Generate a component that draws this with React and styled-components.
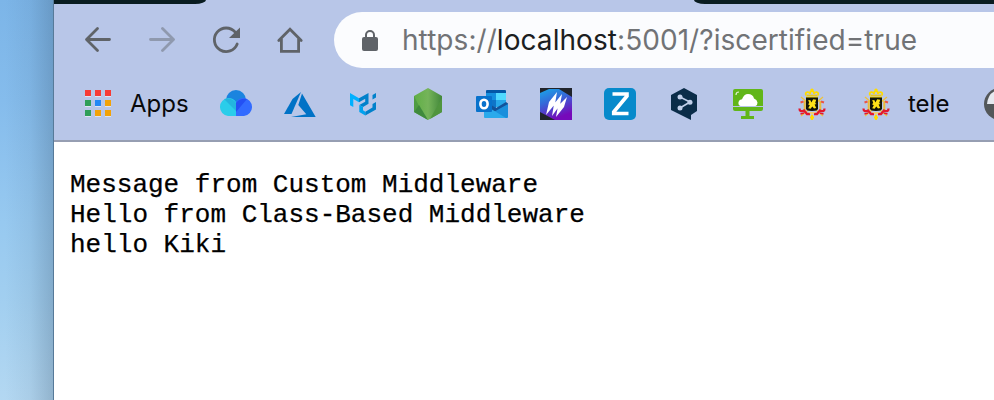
import React from "react";
import styled, { createGlobalStyle } from "styled-components";

const GlobalStyle = createGlobalStyle`
  * { box-sizing: border-box; }
  body { margin: 0; overflow: hidden; background: #fff; }
`;

const Desktop = styled.div`
  display: flex;
  width: 994px;
  height: 400px;
  padding-left: 53px;
  overflow: hidden;
  background:
    linear-gradient(90deg, rgba(45, 70, 95, 0) 5px, rgba(45, 70, 95, 0.07) 30px, rgba(45, 70, 95, 0.25) 53px),
    linear-gradient(176deg, #7cb5e8 0%, #85bcec 25%, #97c9f0 55%, #a2cff0 75%, #b4d8f2 100%) 0 0 / 54px 400px no-repeat;
`;

const Window = styled.main`
  flex: 1;
  display: flex;
  flex-direction: column;
  min-width: 0;
  border-left: 1px solid #577a99;
  background: #fff;
`;

const TabStrip = styled.div`
  display: flex;
  justify-content: space-between;
  height: 4px;
  background: #b8c6e8;
`;

const TabShadow = styled.div`
  width: ${(p) => p.$width}px;
  height: 4px;
  background: #091c20;
  border-radius: ${(p) => (p.$side === "left" ? "0 0 11px 0 / 0 0 4px 0" : "0 0 0 11px / 0 0 0 4px")};
`;

const Toolbar = styled.nav`
  display: flex;
  align-items: center;
  height: 72px;
  padding-left: 28px;
  background: #b8c6e8;
`;

const NavButton = styled.button`
  display: flex;
  width: 32px;
  height: 32px;
  margin-right: 32px;
  padding: 0;
  border: 0;
  background: none;
  color: #5f6368;
  opacity: ${(p) => (p.$dim ? 0.45 : 1)};
  &:last-of-type { margin-right: 28px; }
`;

const AddressBar = styled.div`
  flex: 1;
  display: flex;
  align-items: center;
  height: 56px;
  padding-left: 20px;
  border-radius: 28px 0 0 28px;
  background: #fbfcfe;
  overflow: hidden;
`;

const Url = styled.span`
  margin-left: 16px;
  font: 400 28px/56px Inter, sans-serif;
  letter-spacing: 0.06px;
  white-space: pre;
  color: #717376;
`;

const Host = styled.span`
  color: #1c1e21;
`;

const Bookmarks = styled.div`
  display: flex;
  align-items: center;
  gap: 32px;
  height: 66px;
  padding: 0 0 8px 28px;
  border-bottom: 2px solid #969eb2;
  background: #b8c6e8;
  overflow: hidden;
`;

const Bookmark = styled.a`
  flex: none;
  display: flex;
  align-items: center;
  width: ${(p) => p.$width || 32}px;
  height: 32px;
  gap: 16px;
  color: #08090b;
  font: 400 24px/32px Inter, sans-serif;
`;

const Icon = styled.svg`
  flex: none;
  display: block;
  width: 32px;
  height: 32px;
`;

const Output = styled.pre`
  margin: 0;
  padding: 28px 0 0 16px;
  font: 400 26px/30px "Courier New", "Liberation Mono", monospace;
  color: #000;
  -webkit-text-stroke: 0.25px #000;
`;

const appTiles = [
  ["#f73a35", "#f73a35", "#f73a35"],
  ["#2f9e58", "#2388f5", "#f2a208"],
  ["#2f9e58", "#f2a208", "#f2a208"],
];

const AppsIcon = () => (
  <Icon viewBox="0 0 32 32">
    {appTiles.map((row, y) =>
      row.map((fill, x) => (
        <g key={`${x}-${y}`}>
          <rect x={3 + x * 10} y={3 + y * 10} width="6" height="6" fill="#dde3f2" />
          <rect x={3 + x * 10} y={2 + y * 10} width="6" height="6" fill={fill} />
        </g>
      ))
    )}
  </Icon>
);

const CirclesIcon = () => (
  <Icon viewBox="0 0 32 32">
    <circle cx="16" cy="12" r="10" fill="#1b84df" />
    <path d="M8 10a9 9 0 0 1 8 4v14H8a8.8 8.8 0 0 1-8-9 8.8 8.8 0 0 1 8-9Z" fill="#2acdea" />
    <path d="m4 11 12 12V15q-4-6-12-4Z" fill="#23b4df" />
    <path d="M24 10a9 9 0 0 1 8 9 8.8 8.8 0 0 1-8 9h-8V14a9 9 0 0 1 8-4Z" fill="#326bff" />
    <path d="M16 15q4-5 11-4L16 24Z" fill="#2450f4" />
  </Icon>
);

const AzureIcon = () => (
  <Icon viewBox="0 0 32 32">
    <path d="M17 4 8.5 11 0 26h7.5Z" fill="#0072c6" />
    <path d="m18 5.5 13.7 23.5H7l15.3-2.8-8-9.2Z" fill="#0072c6" />
  </Icon>
);

const MuiIcon = () => (
  <Icon viewBox="0 0 32 32">
    <path d="M2 5v12.3l3.3 1.7v-8l5.7 3.2V10.2Z" fill="#00b0ff" />
    <path d="M11 10.2 20.5 5v10.8L15 19l-3.7-1.9 5.9-3.4v-3l-6.2 3.5Z" fill="#0081cb" />
    <path d="M11.3 17.1v7l6 3.4v-3.8L15 22.3V19Z" fill="#00a2ef" />
    <path d="m17.3 27.5 10.7-6.1v-7.3l-3.5 2v3.3l-7.2 4.3Z" fill="#0081cb" />
    <path d="M24.5 11.5 28 9.5V5l-3.5 2Z" fill="#0081cb" />
  </Icon>
);

const HexIcon = () => (
  <Icon viewBox="0 0 32 32">
    <defs>
      <linearGradient id="hex" x1="0" x2="1"><stop stopColor="#5fae45" /><stop offset=".5" stopColor="#75b45a" /><stop offset="1" stopColor="#42873b" /></linearGradient>
    </defs>
    <path d="m16 0 14 8v16l-14 8-14-8V8Z" fill="url(#hex)" />
    <path d="m2 8 5 10-5 6Z" fill="#4f9c43" />
    <path d="m2 24 5-7 9 15Z" fill="#3f8a3d" />
    <path d="m30 10-12 21 12-7Z" fill="#50953e" />
  </Icon>
);

const OutlookIcon = () => (
  <Icon viewBox="0 0 32 32">
    <path d="M11 2h18q1 0 1 1v16H10V3q0-1 1-1Z" fill="#0358a7" />
    <path d="M10 5h10v7H10Z" fill="#1490df" />
    <path d="M20 5h10v7H20Z" fill="#50d9ff" />
    <path d="M10 12h10v8H10Z" fill="#0f74c8" />
    <path d="M20 12h10v7H20Z" fill="#28a8ea" />
    <path d="M16 17.5 20 20l10-6 2 1.5V17l-13 7h-3Z" fill="#12529a" />
    <path d="M32 16v13q0 1-1 1H16v-5Z" fill="#1a8fdc" />
    <path d="M16 21.5 30 30H9q-1 0-1-1v-5Z" fill="#2aaaec" />
    <rect x="0" y="8" width="16" height="16" rx="1" fill="#0872cc" />
    <ellipse cx="8" cy="16" rx="3.6" ry="4.3" fill="none" stroke="#fff" strokeWidth="2.6" />
  </Icon>
);

const SlashIcon = () => (
  <Icon viewBox="0 0 32 32">
    <defs>
      <linearGradient id="slash" x1="0" x2=".4" y1="0" y2="1"><stop stopColor="#18a8e8" /><stop offset=".45" stopColor="#3568d8" /><stop offset="1" stopColor="#7609ba" /></linearGradient>
    </defs>
    <path d="M0 0h32v32H0Z" fill="#20242b" />
    <path d="M0 5 9 1h10l13 8v23H15L0 24Z" fill="url(#slash)" />
    <path d="m17 4-2 12-9 11 3-13ZM22 6l-2 11-8 11 2-12ZM27 9l-3 10-8 10 2-11Z" fill="#fff" />
  </Icon>
);

const ZIcon = () => (
  <Icon viewBox="0 0 32 32">
    <rect width="32" height="32" rx="5" fill="#078acb" />
    <path d="M8.5 6h14.5v2L9.7 24v1.5H24.5" fill="none" stroke="#fff" strokeWidth="3.6" />
  </Icon>
);

const NodesIcon = () => (
  <Icon viewBox="0 0 32 32">
    <path d="M16 0 29 7v16l-6 4v5L3 22V7Z" fill="#0b2d49" />
    <path d="m12 9 10 5-10 6" fill="none" stroke="#c0cfe9" strokeWidth="1.6" />
    <g fill="#c0cfe9"><circle cx="12" cy="9" r="2.5" /><circle cx="22" cy="14.3" r="2.5" /><circle cx="12" cy="20" r="2.5" /></g>
  </Icon>
);

const MonitorIcon = () => (
  <Icon viewBox="0 0 32 32" fill="#61b619">
    <path d="M3 1h26q2 0 2 2v15H1V3q0-2 2-2ZM1 19h30v2q0 2-2 2H3q-2 0-2-2Z" />
    <path d="M13.5 23h4v5H22v3H9v-3h4.5Z" />
    <path d="M8.5 18q-2.5-.5-2-4 .6-2.5 3.5-2.8Q12 6 16 6q5 0 6 4.5 3 1 3.5 4 0 3-2 3.5Z" fill="#fff" />
    <path d="M4 7q0-3 3-3" fill="none" stroke="#dff1ce" strokeWidth="1.2" />
  </Icon>
);

const CrestIcon = () => (
  <Icon viewBox="0 0 32 32">
    <path d="m5 9 22 19M27 9 5 28" stroke="#efc33a" strokeWidth="1.3" />
    <path d="M10 9.5h12M10 7.5q-1-3 1.3-3.3T14 6q0-3 2-3t2 3q.5-2 2.7-1.8T22 7.5" fill="none" stroke="#ffdc00" strokeWidth="1.8" />
    <path d="M10.5 7.4h11" stroke="#e8c420" strokeWidth="1.5" />
    <path d="M16 .5v3M14.5 1.7h3" stroke="#ffdc00" strokeWidth="1.4" />
    <path d="M8.7 13v9M24.3 13v9" stroke="#e9bd39" strokeWidth="2" />
    <path d="m4.5 14.5 3-1M28 14.5l-3-1" stroke="#ec5544" strokeWidth="2" />
    <path d="M3.5 20.5q0 4 4.5 2l3 3.5h3M28.5 20.5q0 4-4.5 2L21 26h-3" fill="none" stroke="#e3182d" strokeWidth="2.3" />
    <path d="m4.5 26 3.5-1M27.5 26 24 25" stroke="#e3182d" strokeWidth="1.8" />
    <path d="M12 24h8l-4 3Z" fill="#f0cf71" />
    <path d="M16 27v5M14 29.5h4" stroke="#ffdc00" strokeWidth="2" />
    <path d="M10 9.5h12v11q0 2.5-6 2.5t-6-2.5Z" fill="#111408" />
    <path d="m12.2 12 2.3.2.8 2.3 1.9-3.3 3 .5-1 3.2 1.3 1.1-1.9.5 1.6 3.5-2.2.4-1.7-2-1.7 2.3-2.4-.4 1.6-3-1.8-1 1.2-1.3Z" fill="#ffe218" />
  </Icon>
);

const GlobeIcon = () => (
  <Icon viewBox="0 0 32 32">
    <circle cx="16" cy="16" r="16" fill="#535759" />
    <path d="M3 16Q4 6 11 3h15v13Z" fill="#e6e9ef" />
  </Icon>
);

const bookmarks = [
  { id: "apps", Art: AppsIcon, label: "Apps", width: 106 },
  { id: "circles", Art: CirclesIcon },
  { id: "azure", Art: AzureIcon },
  { id: "mui", Art: MuiIcon },
  { id: "hexagon", Art: HexIcon },
  { id: "outlook", Art: OutlookIcon },
  { id: "slash", Art: SlashIcon },
  { id: "z", Art: ZIcon },
  { id: "nodes", Art: NodesIcon },
  { id: "monitor", Art: MonitorIcon },
  { id: "crest", Art: CrestIcon },
  { id: "crest-tele", Art: CrestIcon, label: "tele", width: 92 },
  { id: "globe", Art: GlobeIcon },
];

const strokeProps = { fill: "none", stroke: "currentColor", strokeWidth: 2.8, strokeLinecap: "round", strokeLinejoin: "round" };

export default function App() {
  return (
    <>
      <GlobalStyle />
      <Desktop>
        <Window>
          <TabStrip>
            <TabShadow $width={152} $side="left" />
            <TabShadow $width={300} $side="right" />
          </TabStrip>
          <Toolbar>
            <NavButton aria-label="Back">
              <Icon viewBox="0 0 32 32" {...strokeProps}><path d="M27.5 15.5H5M15.5 4.5l-11 11 11 11" /></Icon>
            </NavButton>
            <NavButton aria-label="Forward" $dim>
              <Icon viewBox="0 0 32 32" {...strokeProps}><path d="M4.5 15.5H27M16.5 4.5l11 11-11 11" /></Icon>
            </NavButton>
            <NavButton aria-label="Reload">
              <Icon viewBox="0 0 32 32" {...strokeProps}>
                <path d="M25.2 8.2A11.8 11.8 0 1 0 27.2 20" />
                <path d="M30 3.5V14H19Z" fill="currentColor" stroke="none" />
              </Icon>
            </NavButton>
            <NavButton aria-label="Home">
              <Icon viewBox="0 0 32 32" {...strokeProps} strokeLinejoin="miter"><path d="M4.8 16.4 16 5.2l11.2 11.2M7.4 15v12.4h17.2V15" /></Icon>
            </NavButton>
            <AddressBar>
              <Icon viewBox="0 0 32 32">
                <rect x="8" y="13" width="16" height="14" rx="2" fill="#5f6368" />
                <path d="M12 14v-3a4 4 0 0 1 8 0v3" fill="none" stroke="#5f6368" strokeWidth="2" />
              </Icon>
              <Url>https://<Host>localhost</Host>:5001/?iscertified=true</Url>
            </AddressBar>
          </Toolbar>
          <Bookmarks>
            {bookmarks.map(({ id, Art, label, width }) => (
              <Bookmark key={id} $width={width}>
                <Art />
                {label}
              </Bookmark>
            ))}
          </Bookmarks>
          <Output>{"Message from Custom Middleware\nHello from Class-Based Middleware\nhello Kiki"}</Output>
        </Window>
      </Desktop>
    </>
  );
}
